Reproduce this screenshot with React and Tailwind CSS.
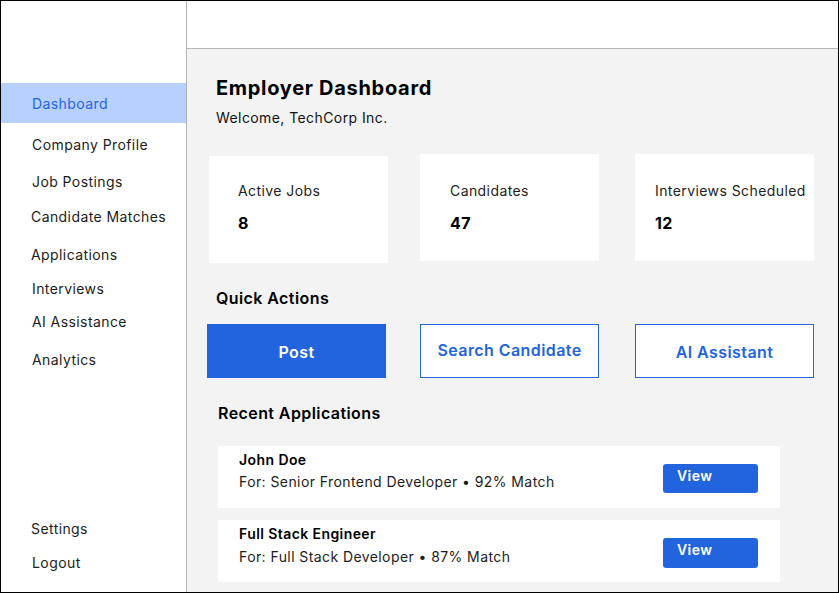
const navItems = [
  { label: 'Company Profile', mt: 'mt-[12px]', x: 'pl-[31px]' },
  { label: 'Job Postings', mt: 'mt-[17px]', x: 'pl-[31px]' },
  { label: 'Candidate Matches', mt: 'mt-[15px]', x: 'pl-[30px]' },
  { label: 'Applications', mt: 'mt-[18px]', x: 'pl-[30px]' },
  { label: 'Interviews', mt: 'mt-[14px]', x: 'pl-[31px]' },
  { label: 'AI Assistance', mt: 'mt-[13px]', x: 'pl-[31px]' },
  { label: 'Analytics', mt: 'mt-[18px]', x: 'pl-[31px]' },
]

const stats = [
  { label: 'Active Jobs', value: '8', box: 'mt-[2px] pt-[25px] pl-[29px]' },
  { label: 'Candidates', value: '47', box: 'ml-[32px] pt-[27px] pl-[30px]' },
  { label: 'Interviews Scheduled', value: '12', box: 'ml-[36px] pt-[27px] pl-[20px]' },
]

const applications = [
  { name: 'John Doe', detail: 'For: Senior Frontend Developer • 92% Match', mt: '', gap: 'mt-[2px]', btn: 'h-[29px]' },
  { name: 'Full Stack Engineer', detail: 'For: Full Stack Developer • 87% Match', mt: 'mt-[12px]', gap: 'mt-[3px]', btn: 'h-[30px]' },
]

function Sidebar() {
  return (
    <aside className="w-[186px] shrink-0 border-r border-[#b3b3b3] bg-white flex flex-col pt-[82px] pb-[19px] text-[14px] leading-[20px] text-[#1c1c1c]">
      <div className="h-[40px] bg-[#b8d0fd] text-[#2563eb] pl-[31px] pt-[2px] flex items-center">Dashboard</div>
      {navItems.map(item => (
        <div key={item.label} className={`${item.mt} ${item.x} h-[20px]`}>{item.label}</div>
      ))}
      <div className="mt-auto pl-[30px] h-[20px]">Settings</div>
      <div className="mt-[14px] pl-[31px] h-[20px]">Logout</div>
    </aside>
  )
}

export default function App() {
  return (
    <div className="w-[839px] h-[593px] border border-black flex overflow-hidden bg-white tracking-[0.026em]" style={{ fontFamily: 'Inter, "Noto Sans", sans-serif' }}>
      <Sidebar />
      <div className="flex-1 flex flex-col min-w-0">
        <header className="h-[48px] shrink-0 bg-white border-b border-[#b3b3b3]" />
        <main className="flex-1 bg-[#f3f3f3] pt-[25px] pl-[20px] overflow-hidden text-[#111]">
          <h1 className="ml-[9px] text-[20px] leading-[28px] font-bold text-black tracking-[0.035em]">Employer Dashboard</h1>
          <p className="ml-[9px] mt-[6px] text-[14px] leading-[20px]">Welcome, TechCorp Inc.</p>

          <div className="flex items-start mt-[26px] ml-[2px]">
            {stats.map(s => (
              <div key={s.label} className={`${s.box} w-[179px] h-[107px] bg-white`}>
                <div className="text-[14px] leading-[20px] text-[#222]">{s.label}</div>
                <div className="mt-[10px] text-[16px] leading-[24px] font-bold text-black">{s.value}</div>
              </div>
            ))}
          </div>

          <h2 className="ml-[9px] mt-[23px] text-[16px] leading-[24px] font-semibold text-black">Quick Actions</h2>
          <div className="flex mt-[14px]">
            <button className="w-[179px] h-[54px] bg-[#2264dd] text-white text-[16px] font-semibold pt-[2px]">Post</button>
            <button className="ml-[34px] w-[179px] h-[54px] bg-white border border-[#2264dd] text-[#2264dd] text-[16px] font-semibold pb-[2px]">Search Candidate</button>
            <button className="ml-[36px] w-[179px] h-[54px] bg-white border border-[#2264dd] text-[#2264dd] text-[16px] font-semibold pt-[2px]">AI Assistant</button>
          </div>

          <h2 className="ml-[11px] mt-[23px] text-[16px] leading-[24px] font-semibold text-black">Recent Applications</h2>
          <div className="ml-[11px] mt-[21px]">
            {applications.map(a => (
              <div key={a.name} className={`${a.mt} w-[562px] h-[62px] bg-white flex items-start pl-[21px]`}>
                <div className="flex-1 pt-[4px]">
                  <div className="text-[14px] leading-[20px] font-semibold text-black">{a.name}</div>
                  <div className={`${a.gap} text-[14px] leading-[20px] text-[#1c1c1c]`}>{a.detail}</div>
                </div>
                <button className={`${a.btn} mt-[18px] mr-[22px] w-[95px] rounded-[3px] bg-[#2264dd] text-white text-[14px] leading-[20px] font-semibold text-left pl-[14px] pb-[6px]`}>View</button>
              </div>
            ))}
          </div>
        </main>
      </div>
    </div>
  )
}
